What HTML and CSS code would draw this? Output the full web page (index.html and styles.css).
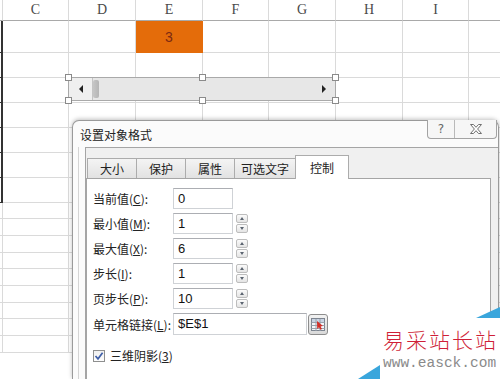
FILE: index.html
```html
<!DOCTYPE html>
<html lang="zh-CN">
<head>
    <meta charset="UTF-8">
    <title>设置对象格式</title>
    <link rel="stylesheet" href="styles.css">
</head>
<body>
    <div class="sheet">
        <div class="row hdr">
            <div class="cell b"></div><div class="cell">C</div><div class="cell">D</div><div class="cell">E</div><div class="cell">F</div><div class="cell">G</div><div class="cell">H</div><div class="cell">I</div><div class="cell"></div>
        </div>
        <div class="row r1 edge">
            <div class="cell b"></div><div class="cell"></div><div class="cell"></div><div class="cell fill">3</div><div class="cell"></div><div class="cell"></div><div class="cell"></div><div class="cell"></div><div class="cell"></div>
        </div>
        <div class="row r2 edge"><div class="cell b"></div><div class="cell"></div><div class="cell"></div><div class="cell"></div><div class="cell"></div><div class="cell"></div><div class="cell"></div><div class="cell"></div><div class="cell"></div></div>
        <div class="row r2 edge"><div class="cell b"></div><div class="cell"></div><div class="cell"></div><div class="cell"></div><div class="cell"></div><div class="cell"></div><div class="cell"></div><div class="cell"></div><div class="cell"></div></div>
        <div class="row r2 edge"><div class="cell b"></div><div class="cell"></div><div class="cell"></div><div class="cell"></div><div class="cell"></div><div class="cell"></div><div class="cell"></div><div class="cell"></div><div class="cell"></div></div>
        <div class="row r2 edge"><div class="cell b"></div><div class="cell"></div><div class="cell"></div><div class="cell"></div><div class="cell"></div><div class="cell"></div><div class="cell"></div><div class="cell"></div><div class="cell"></div></div>
        <div class="row r2 edge"><div class="cell b"></div><div class="cell"></div><div class="cell"></div><div class="cell"></div><div class="cell"></div><div class="cell"></div><div class="cell"></div><div class="cell"></div><div class="cell"></div></div>
        <div class="row r2 edge"><div class="cell b"></div><div class="cell"></div><div class="cell"></div><div class="cell"></div><div class="cell"></div><div class="cell"></div><div class="cell"></div><div class="cell"></div><div class="cell"></div></div>
        <div class="row r4"><div class="cell b"></div><div class="cell"></div><div class="cell"></div><div class="cell"></div><div class="cell"></div><div class="cell"></div><div class="cell"></div><div class="cell"></div><div class="cell"></div></div>
        <div class="row r3"><div class="cell b"></div><div class="cell"></div><div class="cell"></div><div class="cell"></div><div class="cell"></div><div class="cell"></div><div class="cell"></div><div class="cell"></div><div class="cell"></div></div>
        <div class="row r3"><div class="cell b"></div><div class="cell"></div><div class="cell"></div><div class="cell"></div><div class="cell"></div><div class="cell"></div><div class="cell"></div><div class="cell"></div><div class="cell"></div></div>
        <div class="row r4"><div class="cell b"></div><div class="cell"></div><div class="cell"></div><div class="cell"></div><div class="cell"></div><div class="cell"></div><div class="cell"></div><div class="cell"></div><div class="cell"></div></div>
        <div class="row r3"><div class="cell b"></div><div class="cell"></div><div class="cell"></div><div class="cell"></div><div class="cell"></div><div class="cell"></div><div class="cell"></div><div class="cell"></div><div class="cell"></div></div>
        <div class="row r3"><div class="cell b"></div><div class="cell"></div><div class="cell"></div><div class="cell"></div><div class="cell"></div><div class="cell"></div><div class="cell"></div><div class="cell"></div><div class="cell"></div></div>
        <div class="row r4"><div class="cell b"></div><div class="cell"></div><div class="cell"></div><div class="cell"></div><div class="cell"></div><div class="cell"></div><div class="cell"></div><div class="cell"></div><div class="cell"></div></div>
        <div class="row r3"><div class="cell b"></div><div class="cell"></div><div class="cell"></div><div class="cell"></div><div class="cell"></div><div class="cell"></div><div class="cell"></div><div class="cell"></div><div class="cell"></div></div>
        <div class="row r3"><div class="cell b"></div><div class="cell"></div><div class="cell"></div><div class="cell"></div><div class="cell"></div><div class="cell"></div><div class="cell"></div><div class="cell"></div><div class="cell"></div></div>
    </div>

    <!-- form control: scroll bar, selected -->
    <div class="scroll">
        <div class="sc-btn"><span class="arr-l"></span></div>
        <div class="thumb"></div>
        <div class="track"></div>
        <div class="sc-btn right"><span class="arr-r"></span></div>
        <span class="handle tl"></span><span class="handle tm"></span><span class="handle tr"></span>
        <span class="handle bl"></span><span class="handle bm"></span><span class="handle br"></span>
    </div>

    <div class="dialog">
        <div class="titlebar">设置对象格式</div>
        <div class="caption-btns">
            <div class="cap help">?</div>
            <div class="cap close">
                <svg width="14" height="12" viewBox="0 0 14 12">
                    <path d="M1.5 1.5 H4.5 L7 4.3 L9.5 1.5 H12.5 L8.6 6 L12.5 10.5 H9.5 L7 7.7 L4.5 10.5 H1.5 L5.4 6 Z" fill="#fff" stroke="#707070" stroke-width="1" stroke-linejoin="round"/>
                </svg>
            </div>
        </div>
        <div class="frame">
            <div class="panel">
                <div class="tabs">
                    <div class="tab w1">大小</div>
                    <div class="tab w1">保护</div>
                    <div class="tab w1">属性</div>
                    <div class="tab w2">可选文字</div>
                    <div class="tab w3 on">控制</div>
                </div>
                <div class="content">
                    <div class="field">
                        <label>当前值(<u>C</u>):</label>
                        <div class="input">0</div>
                    </div>
                    <div class="field">
                        <label>最小值(<u>M</u>):</label>
                        <div class="input">1</div>
                        <div class="spin"><div class="sb"><span class="up"></span></div><div class="sb"><span class="dn"></span></div></div>
                    </div>
                    <div class="field">
                        <label>最大值(<u>X</u>):</label>
                        <div class="input">6</div>
                        <div class="spin"><div class="sb"><span class="up"></span></div><div class="sb"><span class="dn"></span></div></div>
                    </div>
                    <div class="field">
                        <label>步长(<u>I</u>):</label>
                        <div class="input">1</div>
                        <div class="spin"><div class="sb"><span class="up"></span></div><div class="sb"><span class="dn"></span></div></div>
                    </div>
                    <div class="field">
                        <label>页步长(<u>P</u>):</label>
                        <div class="input">10</div>
                        <div class="spin"><div class="sb"><span class="up"></span></div><div class="sb"><span class="dn"></span></div></div>
                    </div>
                    <div class="field link">
                        <label>单元格链接(<u>L</u>):</label>
                        <div class="input wide">$E$1</div>
                        <div class="ref-btn">
                            <svg width="16" height="15" viewBox="0 0 16 15">
                                <rect x="1.5" y="1.5" width="13" height="12" fill="#f4f6fa" stroke="#7d8590"/>
                                <rect x="2" y="2" width="12" height="3" fill="#c9d3e3"/>
                                <path d="M1.5 5.5 H14.5 M1.5 8.5 H14.5 M1.5 11.5 H14.5 M6 2 V14 M10 2 V14" stroke="#9aa3ae" stroke-width="1" fill="none"/>
                                <path d="M7 4 L13 9 L10.5 9.5 L12 12 L10.5 12.8 L9 10.3 L7.2 12 Z" fill="#d2302a"/>
                            </svg>
                        </div>
                    </div>
                    <div class="check">
                        <span class="cbox">
                            <svg width="10" height="10" viewBox="0 0 10 10">
                                <path d="M1.5 5 L4 7.8 L8.6 1.8" stroke="#3f5fa8" stroke-width="1.7" fill="none"/>
                            </svg>
                        </span>
                        <span>三维阴影(<u>3</u>)</span>
                    </div>
                </div>
            </div>
        </div>
    </div>

    <div class="mark">
        <svg class="mark-tri" width="142" height="72" viewBox="0 0 142 72">
            <polygon points="0,72 22,72 22,58" fill="#3aa6dc"/>
            <polygon points="118,11 142,11 142,0" fill="#3aa6dc"/>
        </svg>
        <div class="mark-cn">易采站长站</div>
        <div class="mark-en">www.easck.com</div>
    </div>
</body>
</html>
```

FILE: styles.css
```css
body {
    margin: 0;
    width: 500px;
    height: 379px;
    overflow: hidden;
    position: relative;
    background: #fff;
    font-family: "Noto Sans CJK SC", sans-serif;
    font-size: 12px;
    color: #222;
}

/* worksheet */
.sheet {
    width: 500px;
    height: 379px;
    overflow: hidden;
}

.row {
    display: grid;
    grid-template-columns: 3px 66px 67px 67px 66px 67px 67px 66px 67px;
}

.cell {
    box-sizing: border-box;
    border-right: 1px solid #dadada;
    border-bottom: 1px solid #dadada;
}

.hdr {
    height: 21px;
}

.hdr .cell {
    border-bottom-color: #a9a9a9;
    text-align: center;
    line-height: 20px;
    font-family: "Liberation Serif", serif;
    font-size: 14px;
    color: #4a4a4a;
}

.r1 { height: 32px; }
.r2 { height: 25px; }
.r3 { height: 17px; }
.r4 { height: 16px; }

.edge .b {
    border-right: 2px solid #333;
    border-bottom-color: #333;
}

.fill {
    background: #e46c0a;
    border-color: #e46c0a;
    color: #7c2a12;
    font-family: "Liberation Sans", sans-serif;
    font-size: 14px;
    display: flex;
    justify-content: center;
    align-items: center;
}

/* scroll bar form control */
.scroll {
    position: absolute;
    left: 68px;
    top: 77px;
    width: 268px;
    height: 24px;
    box-sizing: border-box;
    border: 1px solid #a9a9a9;
    background: #e7e7e7;
    display: flex;
}

.sc-btn {
    width: 23px;
    background: #efefef;
    border-right: 1px solid #c4c4c4;
    display: flex;
    justify-content: center;
    align-items: center;
}

.sc-btn.right {
    background: none;
    border-right: none;
}

.arr-l {
    border-top: 4px solid transparent;
    border-bottom: 4px solid transparent;
    border-right: 4px solid #222;
}

.arr-r {
    border-top: 4px solid transparent;
    border-bottom: 4px solid transparent;
    border-left: 4px solid #222;
}

.thumb {
    width: 6px;
    margin: 2px 0;
    border-radius: 2px;
    background: linear-gradient(to right, #c6c6c6, #b5b5b5);
}

.track {
    flex: 1;
}

.handle {
    position: absolute;
    width: 5px;
    height: 5px;
    background: #fff;
    border: 1px solid #8a8a8a;
}

.tl { left: -4px; top: -4px; }
.tm { left: 130px; top: -4px; }
.tr { right: -4px; top: -4px; }
.bl { left: -4px; bottom: -4px; }
.bm { left: 130px; bottom: -4px; }
.br { right: -4px; bottom: -4px; }

/* dialog */
.dialog {
    position: absolute;
    left: 72px;
    top: 120px;
    width: 427px;
    height: 259px;
    box-sizing: border-box;
    border: 1px solid #9a9a9a;
    border-bottom: none;
    border-radius: 7px 7px 0 0;
    background: #fbfbfb;
    box-shadow: 0 -1px 4px rgba(0, 0, 0, 0.25);
    display: flex;
    flex-direction: column;
}

.titlebar {
    height: 26px;
    flex: none;
    padding-left: 7px;
    display: flex;
    align-items: center;
    font-size: 12px;
}

.caption-btns {
    position: absolute;
    top: -1px;
    right: 1px;
    display: flex;
    height: 18px;
    border: 1px solid #a3a3a3;
    border-top: none;
    border-radius: 0 0 4px 4px;
    background: #f6f6f6;
}

.cap {
    display: flex;
    justify-content: center;
    align-items: center;
}

.help {
    width: 26px;
    border-right: 1px solid #b9b9b9;
    font-family: "DejaVu Sans", sans-serif;
    font-size: 12px;
    color: #666;
}

.close {
    width: 41px;
}

.frame {
    flex: 1;
    display: flex;
    margin-left: 5px;
    padding-left: 6px;
    border-left: 1px solid #d4d4d4;
}

.panel {
    flex: 1;
    display: flex;
    flex-direction: column;
    background: #f0f0f0;
    border-top: 1px solid #a5a5a5;
    border-left: 1px solid #a5a5a5;
    padding: 7px 7px 0 0;
}

.tabs {
    display: flex;
    align-items: flex-end;
    height: 23px;
    flex: none;
    padding-left: 1px;
}

.tab {
    box-sizing: border-box;
    height: 20px;
    margin-right: -1px;
    border: 1px solid #acacac;
    border-bottom: none;
    background: linear-gradient(#f4f4f4, #e2e2e2);
    display: flex;
    justify-content: center;
    align-items: center;
}

.w1 { width: 50px; }
.w2 { width: 62px; }
.w3 { width: 54px; }

.tab.on {
    height: 24px;
    margin-bottom: -1px;
    background: #fff;
    position: relative;
    z-index: 1;
}

.content {
    flex: 1;
    background: #fff;
    border: 1px solid #a5a5a5;
    border-bottom: none;
    padding: 9px 0 0 6px;
}

.field {
    display: flex;
    align-items: center;
    height: 21px;
    margin-bottom: 4px;
}

.field label {
    width: 80px;
}

.input {
    box-sizing: border-box;
    width: 60px;
    height: 21px;
    padding-left: 4px;
    border: 1px solid #cfd2d6;
    border-top-color: #acaeb3;
    font-family: "Liberation Sans", sans-serif;
    font-size: 13px;
    line-height: 19px;
    color: #111;
}

.input.wide {
    width: 134px;
}

.field.link {
    height: 22px;
}

.field.link .input {
    height: 22px;
    line-height: 20px;
}

.spin {
    margin-left: 3px;
    width: 12px;
    height: 19px;
    display: flex;
    flex-direction: column;
    gap: 1px;
}

.sb {
    flex: 1;
    border: 1px solid #bdbdbd;
    border-radius: 2px;
    background: linear-gradient(#fbfbfb, #e4e4e4);
    display: flex;
    justify-content: center;
    align-items: center;
}

.up {
    border-left: 2.5px solid transparent;
    border-right: 2.5px solid transparent;
    border-bottom: 3px solid #5b6470;
}

.dn {
    border-left: 2.5px solid transparent;
    border-right: 2.5px solid transparent;
    border-top: 3px solid #5b6470;
}

.ref-btn {
    box-sizing: border-box;
    margin-left: 1px;
    width: 20px;
    height: 21px;
    border: 1px solid #8d8d8d;
    border-radius: 3px;
    background: linear-gradient(#f2f2f2, #d9d9d9);
    display: flex;
    justify-content: center;
    align-items: center;
}

.check {
    display: flex;
    align-items: center;
    gap: 5px;
    margin-top: 12px;
}

.cbox {
    box-sizing: border-box;
    width: 12px;
    height: 12px;
    border: 1px solid #8e8f8f;
    background: linear-gradient(#f0f0f0, #fdfdfd);
    display: flex;
    justify-content: center;
    align-items: center;
}

/* watermark laid over the corner */
.mark {
    position: absolute;
    left: 358px;
    top: 318px;
    width: 142px;
    height: 61px;
    background: #fff;
    box-sizing: border-box;
    padding: 9px 0 0 25px;
}

.mark-tri {
    position: absolute;
    left: 0;
    top: -11px;
}

.mark-cn {
    font-size: 21px;
    font-weight: 300;
    line-height: 24px;
    letter-spacing: 2px;
    color: #cf1f38;
    white-space: nowrap;
}

.mark-en {
    margin-top: 5px;
    font-family: "Liberation Mono", monospace;
    font-size: 14.5px;
    line-height: 14px;
    color: #8a8a8a;
    white-space: nowrap;
}
```
